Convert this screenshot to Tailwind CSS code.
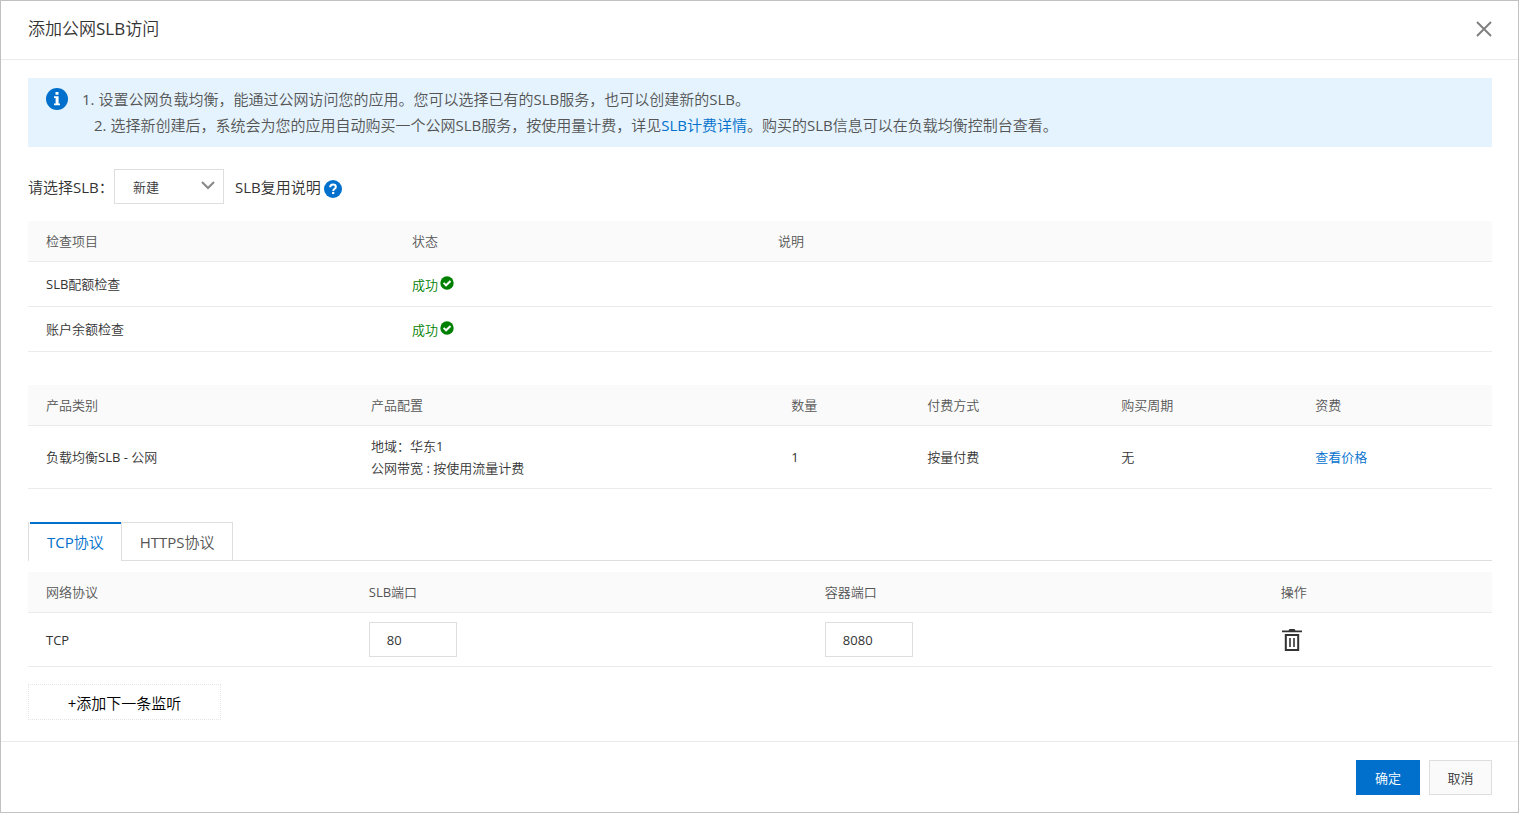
<!DOCTYPE html>
<html lang="zh-CN">
<head>
<meta charset="utf-8">
<meta name="viewport" content="width=device-width, initial-scale=1">
<title>添加公网SLB访问</title>
<script src="https://cdn.jsdelivr.net/npm/@tailwindcss/browser@4"></script>
</head>
<body class="bg-white font-['Open_Sans','Noto_Sans_CJK_SC_DemiLight','Noto_Sans_CJK_SC',sans-serif] text-[13px] leading-[22px] text-[#333]">
<div role="dialog" aria-labelledby="dialog-title" class="flex min-h-screen flex-col border border-[#c1c1c1]">
  <header class="flex items-center justify-between border-b border-[#ebebeb] pr-[26px] pl-[27px] pt-4 pb-[18px]">
    <h1 id="dialog-title" class="text-[17px] leading-6">添加公网SLB访问</h1>
    <button type="button" aria-label="关闭">
      <svg class="size-4 text-[#808080]" viewBox="0 0 16 16" fill="none" stroke="currentColor" stroke-width="2"><path d="M1 1l14 14M15 1L1 15"/></svg>
    </button>
  </header>

  <main class="flex-1 pr-[26px] pl-[27px] pt-[18px] pb-[21px]">
    <div class="flex gap-[14px] bg-[#e4f3fe] px-[18px] pt-2 pb-[9px] text-[15px] leading-[26px] text-[#555]">
      <svg class="mt-[2px] size-[22px] shrink-0" viewBox="0 0 22 22"><circle cx="11" cy="11" r="11" fill="#0070cc"/><path fill="#fff" d="M9.500 4h3v2.800h-3zM8 8.300h4.600v7.200H14v1.800H8v-1.800h1.600v-5.400H8z"/></svg>
      <ol>
        <li>1. 设置公网负载均衡，能通过公网访问您的应用。您可以选择已有的SLB服务，也可以创建新的SLB。</li>
        <li class="pl-3">2. 选择新创建后，系统会为您的应用自动购买一个公网SLB服务，按使用量计费，详见<a href="#" class="text-[#0070cc]">SLB计费详情</a>。购买的SLB信息可以在负载均衡控制台查看。</li>
      </ol>
    </div>

    <div class="mt-[22px] flex items-center text-[15px]">
      <label for="slb" class="w-[86px]">请选择SLB：</label>
      <div class="relative">
        <select id="slb" class="h-[35px] w-[110px] appearance-none border border-[#dedede] bg-white pr-8 pl-[18px] text-[13px]"><option>新建</option></select>
        <svg class="pointer-events-none absolute top-3 right-[9px] h-[9px] w-[14px]" viewBox="0 0 14 9" fill="none" stroke="#888" stroke-width="2"><path d="M1 1l6 6 6-6"/></svg>
      </div>
      <span class="ml-[11px]">SLB复用说明</span>
      <button type="button" aria-label="SLB复用说明帮助" class="mt-1 ml-[3px]">
        <svg class="size-[18px]" viewBox="0 0 18 18"><circle cx="9" cy="9" r="9" fill="#0070cc"/><path d="M6.200 7.200C6.300 5.500 7.400 4.600 9 4.600c1.700 0 2.800.9 2.800 2.300 0 1.900-2.600 1.900-2.600 4" fill="none" stroke="#fff" stroke-width="2"/><path fill="#fff" d="M8.100 11.900h2.200v2.200H8.100z"/></svg>
      </button>
    </div>

    <table class="mt-[17px] w-full table-fixed border-separate border-spacing-0 text-left [&_td]:border-b [&_td]:border-[#ebebeb] [&_td]:px-[18px] [&_th]:border-b [&_th]:border-[#ebebeb] [&_th]:px-[18px] [&_th]:font-normal">
      <colgroup><col class="w-1/4"><col class="w-1/4"><col class="w-1/2"></colgroup>
      <thead class="bg-[#fafafa] text-[#555]">
        <tr class="h-[41px]"><th>检查项目</th><th>状态</th><th>说明</th></tr>
      </thead>
      <tbody>
        <tr class="h-[45px]">
          <td>SLB配额检查</td>
          <td class="text-[#008000]"><span class="flex gap-[2px] pt-[2px]">成功<svg class="mt-[2px] size-[14px]" viewBox="0 0 14 14"><circle cx="7" cy="7" r="6.700" fill="#008000"/><path d="M3.600 6.900l2.500 2.400 4.400-4.300" fill="none" stroke="#fff" stroke-width="2"/></svg></span></td>
          <td></td>
        </tr>
        <tr class="h-[45px]">
          <td>账户余额检查</td>
          <td class="text-[#008000]"><span class="flex gap-[2px] pt-[2px]">成功<svg class="mt-[2px] size-[14px]" viewBox="0 0 14 14"><circle cx="7" cy="7" r="6.700" fill="#008000"/><path d="M3.600 6.900l2.500 2.400 4.400-4.300" fill="none" stroke="#fff" stroke-width="2"/></svg></span></td>
          <td></td>
        </tr>
      </tbody>
    </table>

    <table class="mt-[33px] w-full table-fixed border-separate border-spacing-0 text-left [&_td]:border-b [&_td]:border-[#ebebeb] [&_td]:px-[18px] [&_th]:border-b [&_th]:border-[#ebebeb] [&_th]:px-[18px] [&_th]:font-normal">
      <colgroup><col class="w-[22.2%]"><col class="w-[28.7%]"><col class="w-[9.3%]"><col class="w-[13.25%]"><col class="w-[13.25%]"><col></colgroup>
      <thead class="bg-[#fafafa] text-[#555]">
        <tr class="h-[41px]"><th>产品类别</th><th>产品配置</th><th>数量</th><th>付费方式</th><th>购买周期</th><th>资费</th></tr>
      </thead>
      <tbody>
        <tr class="h-[63px]">
          <td>负载均衡SLB - 公网</td>
          <td><p>地域：华东1</p><p>公网带宽 : 按使用流量计费</p></td>
          <td>1</td>
          <td>按量付费</td>
          <td>无</td>
          <td><a href="#" class="text-[#0070cc]">查看价格</a></td>
        </tr>
      </tbody>
    </table>

    <div role="tablist" class="mt-[33px] flex border-b border-[#dedede] text-[15px]">
      <button type="button" role="tab" aria-selected="true" class="-mb-px h-[39px] border-l border-[#dedede] bg-white pl-px text-[#0070cc]"><span class="flex h-full items-center border-t-2 border-[#0070cc] px-[17px] pb-px">TCP协议</span></button>
      <button type="button" role="tab" aria-selected="false" class="h-[38px] border border-b-0 border-[#dedede] pr-[17px] pl-[18px] pt-px text-[#555]">HTTPS协议</button>
    </div>

    <table class="mt-[11px] w-full table-fixed border-separate border-spacing-0 text-left [&_td]:border-b [&_td]:border-[#ebebeb] [&_td]:px-[18px] [&_th]:border-b [&_th]:border-[#ebebeb] [&_th]:px-[18px] [&_th]:font-normal">
      <colgroup><col class="w-[22.05%]"><col class="w-[31.15%]"><col class="w-[31.15%]"><col></colgroup>
      <thead class="bg-[#fafafa] text-[#555]">
        <tr class="h-[41px]"><th>网络协议</th><th id="slb-port">SLB端口</th><th id="container-port">容器端口</th><th>操作</th></tr>
      </thead>
      <tbody>
        <tr class="h-[54px]">
          <td>TCP</td>
          <td><input type="text" value="80" aria-labelledby="slb-port" class="block h-[35px] w-[88px] border border-[#dedede] px-[17px] pt-px"></td>
          <td><input type="text" value="8080" aria-labelledby="container-port" class="block h-[35px] w-[88px] border border-[#dedede] px-[17px] pt-px"></td>
          <td><button type="button" aria-label="删除" class="block pl-px">
            <svg class="h-[22px] w-5" viewBox="0 0 20 22"><path fill="#333" d="M0 1.500h6.500L7.500 0h5l1 1.500H20V3.300H0z"/><path d="M3.800 5.900h12.400v15.100H3.800z" fill="none" stroke="#333" stroke-width="2"/><path d="M8 9v9M12 9v9" stroke="#333" stroke-width="1.600"/></svg>
          </button></td>
        </tr>
      </tbody>
    </table>

    <button type="button" class="mt-[17px] h-9 w-[193px] border border-dotted border-[#e5e5e5] pt-[2px] text-[15px] text-black">+添加下一条监听</button>
  </main>

  <footer class="flex justify-end gap-[9px] border-t border-[#ebebeb] px-[26px] pt-[18px] pb-[17px]">
    <button type="button" class="h-[35px] w-16 bg-[#0070cc] text-white">确定</button>
    <button type="button" class="h-[35px] w-[63px] border border-[#dedede] bg-[#fafafa]">取消</button>
  </footer>
</div>
</body>
</html>
